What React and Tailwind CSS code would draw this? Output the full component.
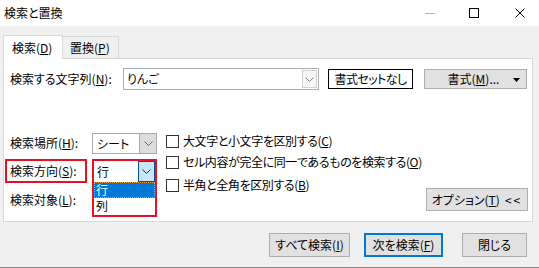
import React from "react";

const Chevron = ({ color = "#606060" }) => (
  <svg width="9" height="5" viewBox="0 0 9 5">
    <path d="M0.5 0.5 L4.5 4.5 L8.5 0.5" fill="none" stroke={color} strokeWidth="1" />
  </svg>
);

const Check = ({ children }) => (
  <div className="flex items-center h-[20px]">
    <div className="w-[13px] h-[13px] border border-[#333333] bg-white shrink-0" />
    <span className="ml-[4px] leading-[16px] whitespace-nowrap tracking-[-0.4px]">{children}</span>
  </div>
);

const Btn = ({ w, children, primary }) => (
  <div
    className={
      "h-[24px] flex items-center justify-center bg-[#e1e1e1] " +
      (primary ? "border-2 border-[#0078d7]" : "border border-[#adadad]")
    }
    style={{ width: w }}
  >
    <span className="leading-[16px] whitespace-nowrap">{children}</span>
  </div>
);

export default function App() {
  return (
    <div className="w-[539px] h-[268px] bg-[#f0f0f0] text-[12px] text-black font-['Noto_Sans_CJK_JP','Noto_Sans',sans-serif] [font-feature-settings:'palt'] flex flex-col overflow-hidden">
      {/* Title bar */}
      <div className="h-[26px] bg-white flex items-center shrink-0">
        <span className="pl-[4px] leading-[16px]">検索と置換</span>
        <div className="ml-auto flex items-center pr-[14px]">
          <div className="w-[10px] h-[1px] bg-[#b0b0b0]" />
          <div className="ml-[34px] w-[10px] h-[10px] border border-black" />
          <svg className="ml-[36px]" width="10" height="10" viewBox="0 0 10 10">
            <path d="M0.5 0.5 L9.5 9.5 M9.5 0.5 L0.5 9.5" stroke="#000" strokeWidth="1" />
          </svg>
        </div>
      </div>

      {/* Tabs */}
      <div className="mt-[8px] ml-[3px] flex items-end h-[24px] shrink-0">
        <div className="w-[60px] h-[24px] bg-white border-l border-t border-r border-[#d9d9d9] flex items-center pl-[8px] relative z-10 -mb-px">
          <span className="leading-[16px]">
            検索(<u>D</u>)
          </span>
        </div>
        <div className="w-[56px] h-[22px] bg-[#f0f0f0] border-t border-r border-[#d9d9d9] flex items-center pl-[7px]">
          <span className="leading-[16px]">
            置換(<u>P</u>)
          </span>
        </div>
      </div>

      {/* Panel */}
      <div className="ml-[3px] w-[530px] h-[164px] bg-white border border-[#d9d9d9] flex flex-col shrink-0">
        {/* Row 1 */}
        <div className="mt-[9px] h-[22px] flex items-center">
          <span className="w-[119px] pl-[6px] leading-[16px] whitespace-nowrap">
            検索する文字列(<u>N</u>):
          </span>
          <div className="w-[196px] h-[22px] border border-[#abadb3] bg-white flex items-center">
            <span className="flex-1 pl-[3px] leading-[16px]">りんご</span>
            <div className="w-[15px] h-[18px] mr-[1px] border border-[#d0d0d0] bg-[#f6f6f6] flex items-center justify-center">
              <Chevron color="#808080" />
            </div>
          </div>
          <div className="ml-[9px] w-[85px] h-[20px] border border-black flex items-center justify-center">
            <span className="leading-[16px] whitespace-nowrap tracking-[-0.6px]">書式セットなし</span>
          </div>
          <div className="ml-[11px] w-[103px] h-[20px] bg-[#e1e1e1] border border-[#adadad] flex items-center relative">
            <span className="flex-1 text-center leading-[16px] pr-[4px] whitespace-nowrap">
              書式(<u>M</u>)...
            </span>
            <svg className="absolute right-[6px] top-[8px]" width="7" height="4" viewBox="0 0 7 4">
              <path d="M0 0 L7 0 L3.5 4 Z" fill="#000" />
            </svg>
          </div>
        </div>

        {/* Lower section */}
        <div className="mt-[41px] flex h-[80px]">
          {/* Left column */}
          <div className="flex flex-col shrink-0">
            <div className="h-[24px] flex items-center">
              <div className="ml-[1px] w-[82px] h-[24px] border-2 border-transparent pl-[3px] flex items-center">
                <span className="leading-[16px] whitespace-nowrap">
                  検索場所(<u>H</u>):
                </span>
              </div>
              <div className="ml-[5px] w-[65px] h-[21px] border border-[#a9a9a9] bg-white flex">
                <span className="flex-1 pl-[4px] leading-[19px]">シート</span>
                <div className="w-[17px] bg-[#dcdcdc] border-l border-[#a9a9a9] flex items-center justify-center">
                  <Chevron />
                </div>
              </div>
            </div>
            <div className="mt-[4px] h-[24px] flex items-center">
              <div className="ml-[1px] w-[82px] h-[24px] border-2 border-[#e81123] pl-[3px] flex items-center">
                <span className="leading-[16px] whitespace-nowrap">
                  検索方向(<u>S</u>):
                </span>
              </div>
              <div className="ml-[5px] w-[65px] h-[24px] relative z-10">
                <div className="absolute left-0 top-0 w-[65px] h-[58px] border-2 border-[#e81123] bg-white flex flex-col">
                  <div className="h-[21px] flex">
                    <span className="flex-1 pl-[3px] leading-[21px]">行</span>
                    <div className="w-[17px] bg-[#cce4f7] border border-[#005499] flex items-center justify-center">
                      <Chevron color="#333" />
                    </div>
                  </div>
                  <div className="h-[16px] bg-[#0078d7] text-white border border-dotted border-[#f0a040] pl-[1px] flex items-center">
                    <span className="leading-[14px]">行</span>
                  </div>
                  <div className="h-[16px] pl-[2px] flex items-center">
                    <span className="leading-[14px]">列</span>
                  </div>
                </div>
              </div>
            </div>
            <div className="mt-[6px] h-[22px] flex items-center">
              <div className="ml-[1px] w-[82px] border-2 border-transparent pl-[3px] flex items-center">
                <span className="leading-[16px] whitespace-nowrap">
                  検索対象(<u>L</u>):
                </span>
              </div>
            </div>
          </div>

          {/* Checkboxes */}
          <div className="ml-[9px] flex flex-col shrink-0">
            <Check>
              大文字と小文字を区別する(<u>C</u>)
            </Check>
            <div className="mt-[1px]">
              <Check>
                セル内容が完全に同一であるものを検索する(<u>O</u>)
              </Check>
            </div>
            <div className="mt-[3px]">
              <Check>
                半角と全角を区別する(<u>B</u>)
              </Check>
            </div>
          </div>

          {/* Options button */}
          <div className="ml-auto mr-[4px] flex flex-col justify-end shrink-0">
            <div className="w-[102px] h-[23px] bg-[#e1e1e1] border border-[#adadad] flex items-center justify-center">
              <span className="leading-[16px] whitespace-nowrap">
                オプション(<u>T</u>)
              </span>
              <span className="ml-[5px] leading-[16px] whitespace-nowrap tracking-[2px]">&lt;&lt;</span>
            </div>
          </div>
        </div>
      </div>

      {/* Bottom buttons */}
      <div className="mt-[11px] flex items-center h-[24px] shrink-0">
        <div className="ml-[269px]">
          <Btn w={81}>
            すべて検索(<u>I</u>)
          </Btn>
        </div>
        <div className="ml-[14px]">
          <Btn w={79} primary>
            次を検索(<u>F</u>)
          </Btn>
        </div>
        <div className="ml-[19px]">
          <Btn w={65}>閉じる</Btn>
        </div>
      </div>
      <div className="mt-[10px] h-[1px] bg-[#8a8a8a] shrink-0" />
    </div>
  );
}
